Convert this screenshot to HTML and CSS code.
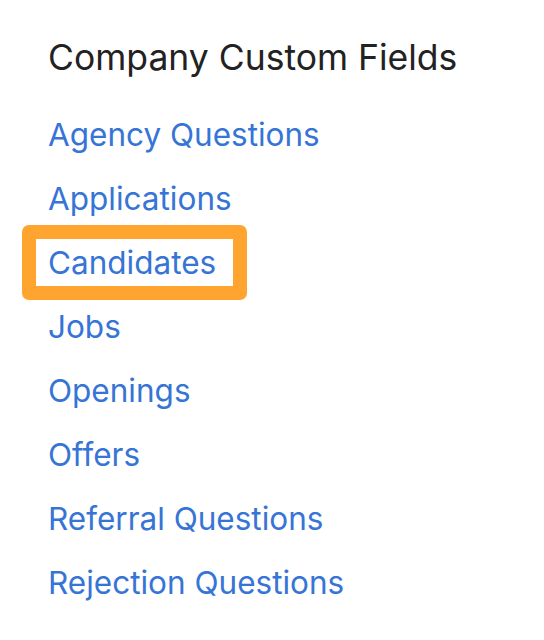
FILE: index.html
```html
<!DOCTYPE html>
<html lang="en">
<head>
    <meta charset="UTF-8">
    <title>Company Custom Fields</title>
    <link rel="stylesheet" href="styles.css">
</head>
<body>
    <div class="panel">
        <h1>Company Custom Fields</h1>
        <ul class="field-list">
            <li><a href="#">Agency Questions</a></li>
            <li><a href="#">Applications</a></li>
            <li><a href="#" class="highlighted">Candidates</a></li>
            <li><a href="#">Jobs</a></li>
            <li><a href="#">Openings</a></li>
            <li><a href="#">Offers</a></li>
            <li><a href="#">Referral Questions</a></li>
            <li><a href="#">Rejection Questions</a></li>
        </ul>
    </div>
</body>
</html>
```
FILE: styles.css
```css
* {
    margin: 0;
    padding: 0;
    box-sizing: border-box;
}

body {
    font-family: Inter, "Noto Sans", sans-serif;
    background: #ffffff;
    color: #222222;
}

.panel {
    padding: 36px 48px 0;
}

h1 {
    font-size: 35.5px;
    font-weight: 400;
    line-height: 44px;
    color: #222222;
}

.field-list {
    list-style: none;
    margin-top: 23px;
}

.field-list li {
    height: 64px;
    display: flex;
    align-items: center;
}

.field-list a {
    position: relative;
    font-size: 31.5px;
    line-height: 40px;
    color: #3674d6;
    text-decoration: none;
}

.highlighted::after {
    content: "";
    position: absolute;
    left: -26px;
    top: -18px;
    right: -31px;
    bottom: -17px;
    border: 14px solid #ffa52f;
    border-radius: 7px;
}
```
